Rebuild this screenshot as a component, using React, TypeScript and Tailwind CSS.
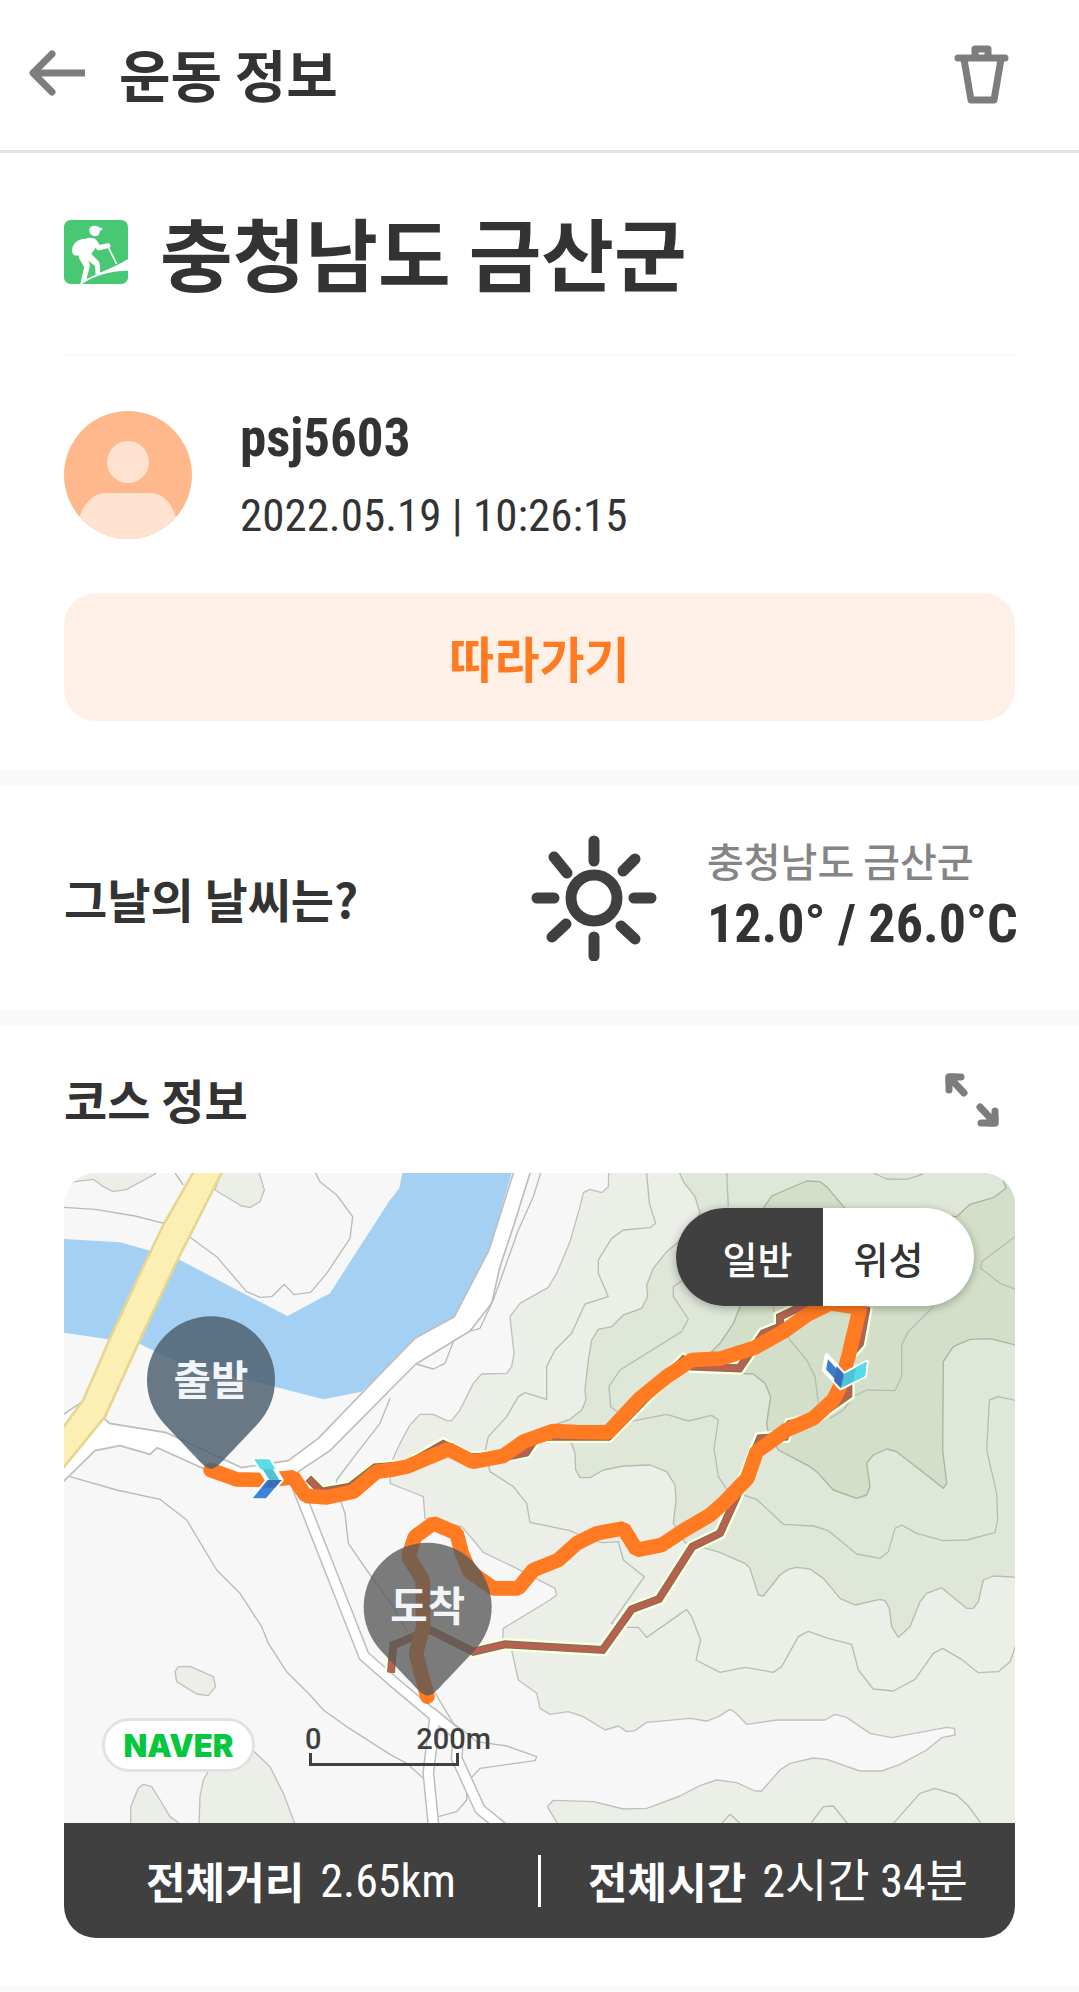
import type { ReactNode } from "react";

const ORANGE = "#ff7a20";

const water =
  "M12 207 180 217 270 242 360 270 560 375 682 438 810 370 880 260 990 90 1018 55 1027 9 1355 9 1285 250 1180 443 1065 505 990 582 905 665 790 688 645 650 350 575 235 520 145 508 12 488Z";

const lightWoods =
  "M1646 9 1645 50 1625 68 1590 58 1570 68 1560 110 1530 215 1490 310 1465 352 1380 400 1350 440 1362 550 1355 590 1340 610 1265 612 1240 640 1200 720 1175 752 1160 752 1120 733 1080 733 1050 765 1020 820 995 875 990 940 1040 960 1090 980 1095 1045 1205 1070 1240 1110 1270 1147 1370 1195 1485 1255 1490 1275 1470 1290 1330 1375 1328 1410 1355 1440 1375 1530 1430 1570 1440 1615 1470 1633 1525 1625 1570 1640 1635 1680 1675 1668 1700 1685 1725 1682 1760 1657 1890 1645 1940 1653 1975 1640 2010 1618 2025 1627 2060 1663 2150 1650 2295 1650 2325 1633 2360 1642 2430 1690 2495 1703 2660 1672 2683 1675 2686 1695 2645 1703 2600 1740 2520 1783 2465 1803 2400 1803 2300 1768 2260 1764 2190 1780 2160 1800 2105 1863 2085 1863 2030 1838 1970 1830 1920 1847 1860 1878 1760 1915 1690 1917 1600 1895 1480 1891 1462 1910 1495 1965 2875 1965 2875 0 1646 0Z";

const midWoods =
  "M1855 0 1870 35 1905 80 1920 130 1850 220 1820 245 1780 295 1760 345 1763 380 1745 415 1690 435 1655 470 1615 478 1595 510 1585 570 1575 660 1578 690 1565 720 1530 748 1490 762 1535 822 1545 850 1547 900 1560 923 1590 923 1630 900 1690 888 1770 885 1820 905 1845 945 1848 990 1840 1060 1875 1118 1980 1147 2020 1165 2055 1180 2070 1195 2095 1275 2110 1278 2160 1215 2185 1198 2210 1192 2250 1197 2290 1225 2340 1285 2385 1305 2460 1288 2475 1292 2488 1315 2495 1370 2515 1402 2550 1370 2580 1295 2600 1270 2645 1253 2720 1315 2740 1315 2755 1295 2770 1230 2800 1218 2875 1222 2875 0Z";

const darkWoods =
  "M2110 115 2135 78 2240 33 2280 35 2300 50 2355 115 2690 140 2730 103 2800 83 2838 55 2825 20 2875 0 2875 527 2790 506 2730 508 2680 530 2650 575 2648 840 2660 940 2650 955 2600 915 2510 845 2480 837 2440 855 2420 880 2430 950 2420 975 2390 985 2320 960 2270 905 2250 890 2155 840 2125 790 2120 760 2132 680 2115 640 2080 612 2030 610 1955 545 1980 520 2020 460 2040 410Z";

const groves = [
  "M20 45 45 35 100 28 130 50 160 65 200 58 280 15 300 0 12 0Z",
  "M485 0 465 60 545 108 570 112 600 95 613 60 595 0Z",
  "M345 1505 355 1490 390 1489 460 1520 467 1550 445 1577 410 1572 350 1535Z",
  "M212 1965 212 1910 235 1855 250 1843 275 1850 300 1890 330 1940 365 1965Z",
  "M417 1965 420 1880 430 1830 450 1795 530 1730 575 1738 630 1790 670 1870 706 1965Z",
];

const contours = [
  "M345 9 370 45",
  "M12 112 105 118 225 138 312 160",
  "M385 198 470 260 560 365 600 382 635 380 673 343 702 374 752 367 800 310 870 205 878 140 830 75 780 35 762 0",
  "M30 920 170 960 300 988 380 1050 470 1200 540 1270 605 1370 625 1420 680 1505 750 1575 790 1620 860 1670 990 1753 1040 1780 1090 1825",
  "M1442 9 1420 80 1375 180 1300 390 1260 475 1225 485",
  "M1068 582 1120 597 1155 580 1180 515",
  "M990 685 960 760 890 850 830 930 828 955 855 1030 865 1120 920 1200 1000 1310 1080 1450 1120 1560 1180 1660 1220 1690 1250 1715 1340 1728 1430 1760 1425 1772 1260 1795 1235 1822 1220 1840 1220 1890 1190 1925 1135 1940",
  "M1760 9 1768 100 1787 160 1770 173 1690 180 1655 205 1615 270 1615 310 1645 380 1575 402 1535 490 1485 540 1460 590 1460 688 1395 668 1375 680 1340 740 1285 800 1275 845 1290 905 1360 950 1400 1000 1410 1057 1530 1082 1560 1095 1625 1118 1675 1115 1690 1170 1753 1220 1655 1360 1700 1372 1735 1372 1760 1402 1880 1318 1895 1340 1922 1410 1908 1470 1980 1507 2055 1492 2140 1507 2165 1490 2215 1400 2245 1384 2305 1405 2375 1423 2395 1500 2440 1557 2500 1563 2565 1528 2620 1450 2648 1435 2700 1465 2755 1508 2815 1505 2850 1475 2868 1425",
  "M1870 330 1840 350 1840 380 1885 447 1865 485 1680 600 1647 650 1652 710 1710 755 1820 733 1885 753 1955 736 1975 750 1962 835 1975 920 2005 965 2050 975 2090 988 2170 1063 2260 1068 2305 1082 2390 1152 2460 1165 2485 1145 2505 1075 2525 1065 2570 1090 2650 1112 2720 1110 2805 1088 2813 1050 2810 970 2780 840 2788 690 2815 680 2868 692",
  "M2000 9 2005 110",
  "M2440 9 2480 27 2540 28 2590 12",
  "M2868 198 2765 275 2762 295 2820 340 2868 358",
  "M2620 410 2545 485 2525 525 2525 620 2505 662 2420 660 2380 680 2350 720 2310 745",
  "M2140 410 2145 440 2190 510 2240 570 2265 620 2275 700",
  "M1985 1960 2010 1933 2040 1960",
  "M2253 1960 2290 1910 2320 1908 2362 1960",
  "M2500 1960 2580 1870 2625 1855 2690 1875 2725 1908 2763 1960",
];

const riverRoad =
  "M0 945 12 933 105 842 180 827 270 853 292 833 440 900 530 945 700 940 715 905 810 842 990 660 1068 582 1230 483 1295 400 1320 290 1360 170 1413 0 1363 0 1287 240 1183 440 1065 505 990 582 775 805 685 872 545 893 320 788 148 760 130 742 60 700 0 740Z";

const southRoads = "M712 950 912 1458 1000 1535 1125 1640 1105 1810 1121 1970M1110 1625 1195 1695 1190 1765 1260 1918 1330 1975";

const trail =
  "M745 925 785 965 870 950 945 892 1040 885 1150 822 1230 862 1350 858 1398 848 1430 800 1645 800 1870 570 1895 590 2038 595 2110 490 2160 470 2160 440 2240 402M2420 410 2400 520 2365 560 2365 675 2265 745 2190 762 2175 800 2100 805 2030 980 1980 1090 1897 1130 1797 1287 1715 1318 1628 1440 1335 1423 1240 1445 1110 1380 1000 1425 993 1508";

const route =
  "M452 900 530 928 620 930 700 922 738 978 800 982 880 965 950 905 990 900 1040 890 1165 838 1238 875 1330 858 1390 815 1480 783 1550 786 1645 787 1740 685 1820 620 1895 570 1980 566 2080 535 2170 485 2240 435 2310 400 2400 413 2365 560 2340 650 2320 690 2260 745 2180 780 2090 845 2062 925 1990 1000 1950 1035 1870 1082 1805 1125 1730 1140 1690 1075 1610 1090 1550 1120 1495 1170 1420 1200 1375 1255 1300 1255 1230 1205 1205 1150 1190 1090 1120 1060 1065 1100 1045 1160 1088 1230 1090 1370 1068 1450 1102 1580";

function Pin({ x, y, color, opacity, label }: { x: number; y: number; color: string; opacity: number; label: string }) {
  return (
    <g transform={`translate(${x} ${y})`}>
      <path
        d="M0 265C-20 262-35 240-60 215L-140 130A192 192 0 1 1 140 130L60 215C35 240 20 262 0 265Z"
        fill={color}
        fillOpacity={opacity}
      />
      <text y="42" textAnchor="middle" fontSize="122" fontWeight="700" fill="#f1f5f9">
        {label}
      </text>
    </g>
  );
}

function CourseMap() {
  return (
    <svg viewBox="12 9 2853 1950" className="block h-auto w-full bg-[#f7f7f7]" role="img" aria-label="코스 지도">
      <g stroke="#bfc1bd" strokeWidth="4" strokeLinejoin="round" fill="none">
        <path d={water} fill="#a4d1f3" stroke="none" />
        <path d={lightWoods} fill="#ecefe8" />
        <path d={midWoods} fill="#dfe7d9" stroke="#b5bdaf" />
        <path d={darkWoods} fill="#d3dfc8" stroke="#a9b5a0" />
        {groves.map((d) => (
          <path key={d} d={d} fill="#ecefe8" />
        ))}
        {contours.map((d) => (
          <path key={d} d={d} stroke="#b8bcb4" />
        ))}
        <path d={southRoads} stroke="#bdbdbd" strokeWidth="36" />
        <path d={riverRoad} fill="#ffffff" stroke="#bdbdbd" strokeWidth="5" />
        <path d={southRoads} stroke="#ffffff" strokeWidth="27" />
        <path d="M404 0 310 165 245 300 150 505 70 690 0 785V905L135 740 235 520 355 265 489 0Z" fill="#fbefb3" stroke="#e6d691" strokeWidth="8" />
      </g>
      <g fill="none">
        <path d={trail} stroke="#fdffe6" strokeWidth="38" />
        <path d={trail} stroke="#827443" strokeWidth="24" />
        <path d={trail} stroke="#b96053" strokeWidth="17" />
        <path d={route} stroke={ORANGE} strokeWidth="44" strokeLinecap="round" strokeLinejoin="bevel" />
      </g>
      <g strokeLinejoin="round">
        <path d="M582 868H628L665 930 618 985H578L622 932Z" fill="#4fc3d4" stroke="#fff" strokeWidth="12" />
        <path d="M582 868H628L646 898H602Z" fill="#5cdbe9" />
        <path d="M622 930H665L618 985H578Z" fill="#3d86d6" />
        <path d="M628 930H665L645 953H610Z" fill="#3a6fb8" />
        <path d="M2300 555 2352 612 2420 575 2415 618 2342 655 2292 600Z" fill="#3b7fcb" stroke="#fff" strokeWidth="12" />
        <path d="M2352 612 2420 575 2415 618 2342 655Z" fill="#4fc3d4" />
        <path d="M2388 592 2420 575 2415 618 2380 636Z" fill="#55dbe9" />
        <path d="M2330 588 2352 612 2342 655 2322 633Z" fill="#3a6fb8" />
      </g>
      <Pin x={453} y={632} color="#4d5f6f" opacity={0.84} label="출발" />
      <Pin x={1103} y={1312} color="#585858" opacity={0.78} label="도착" />
    </svg>
  );
}

function SunIcon() {
  return (
    <svg viewBox="0 0 126 126" className="size-[126px] shrink-0" fill="none" stroke="#404040" strokeLinecap="round" aria-hidden="true">
      <circle cx="63" cy="63" r="23" strokeWidth="11" />
      <path
        strokeWidth="11"
        d="M63 6v20M63 102v19M6 63h17M103 63h17M23 22l13 16M104 24 92 36M21 102l14-13M90 91l14 13"
      />
    </svg>
  );
}

function HikerIcon() {
  return (
    <svg viewBox="24 26 192 192" className="size-16 shrink-0" fill="#fff" aria-hidden="true">
      <rect x="24" y="26" width="192" height="192" rx="20" fill="#48c774" />
      <path d="M70 218C110 188 165 175 216 143V178C160 178 110 195 78 218Z" />
      <path d="M100 60C98 49 106 43 116 43 124 43 128 46 131 49L139 50 138 56 132 58 129 68C125 78 104 78 100 60Z" />
      <path d="M88 82C65 82 48 98 48 118 48 132 60 136 72 130L84 108Z" />
      <path d="M86 84C96 76 118 78 123 88L131 101 154 96C164 94 167 107 158 110L131 117C125 118 122 114 119 109L106 128 127 149C133 156 132 165 133 190L119 194 117 164 96 148 101 159C103 168 94 186 92 208L74 216C77 196 84 174 84 166L70 142C65 132 70 116 78 102Z" />
      <path d="M156 106 182 158" stroke="#fff" strokeWidth="5" />
    </svg>
  );
}

function Stat({ label, children }: { label: string; children: ReactNode }) {
  return (
    <div className="flex items-center gap-4">
      <dt className="text-[43px] font-bold">{label}</dt>
      <dd className="font-['Roboto_Condensed','Noto_Sans_CJK_KR',sans-serif] text-[46px]">{children}</dd>
    </div>
  );
}

export default function App() {
  return (
    <div className="min-h-screen bg-white font-['Noto_Sans_CJK_KR',sans-serif] text-[#333]">
      <header className="flex h-[153px] items-center border-b-[3px] border-[#e2e2e2] pr-[69px] pb-1 pl-7">
        <button type="button" aria-label="뒤로" className="mr-[34px] shrink-0">
          <svg viewBox="0 0 57 46" className="h-[46px] w-[57px]" fill="none" stroke="#7d7d7d" strokeWidth="7">
            <path d="M4 23H57" />
            <path d="M24 4 5 23 24 42" strokeLinecap="round" strokeLinejoin="round" />
          </svg>
        </button>
        <h1 className="grow text-[56px] leading-none font-bold">운동 정보</h1>
        <button type="button" aria-label="삭제" className="shrink-0">
          <svg viewBox="0 0 64 64" className="size-16" fill="none" stroke="#7d7d7d" strokeLinecap="round" strokeLinejoin="round" strokeWidth="7">
            <path d="M12 17H59M29 15V8H42V15M18 18 25 59H48L55 18" />
          </svg>
        </button>
      </header>

      <main>
        <section className="px-16 pb-[49px]">
          <div className="flex h-[204px] items-center gap-8 border-b-[3px] border-[#fafafa] pb-1">
            <HikerIcon />
            <h2 className="text-[79px] leading-none font-bold">충청남도 금산군</h2>
          </div>
          <div className="flex items-center gap-12 py-[47px]">
            <svg viewBox="0 0 128 128" className="size-32 shrink-0 rounded-full bg-[#ffb88c]" role="img" aria-label="프로필">
              <circle cx="64" cy="51" r="21" fill="#ffe2d0" />
              <path d="M14 128V112C18 94 28 82 42 82H86C100 82 110 94 113 112V128Z" fill="#ffe2d0" />
            </svg>
            <div className="flex flex-col gap-[18px] pt-1 font-['Roboto_Condensed','Liberation_Sans',sans-serif] leading-[60px]">
              <p className="text-[53px] font-bold">psj5603</p>
              <p className="text-[45px]">2022.05.19 | 10:26:15</p>
            </div>
          </div>
          <button type="button" className="h-32 w-full rounded-[32px] bg-[#fff0e7] text-[49px] font-bold text-[#ff7a20]">
            따라가기
          </button>
        </section>

        <section className="flex items-center border-y-[16px] border-[#f9f9f9] px-16 py-12">
          <h3 className="grow text-[47px] font-bold">그날의 날씨는?</h3>
          <SunIcon />
          <div className="ml-[50px] w-[308px] shrink-0">
            <p className="text-[40px] leading-[52px] font-medium whitespace-nowrap text-[#858585]">충청남도 금산군</p>
            <p className="font-['Roboto_Condensed','Liberation_Sans',sans-serif] text-[54px] leading-[76px] font-bold whitespace-nowrap">
              12.0° / 26.0°C
            </p>
          </div>
        </section>

        <section className="px-16 pb-12">
          <div className="flex h-[147px] items-center justify-between pr-4">
            <h3 className="text-[47px] font-bold">코스 정보</h3>
            <button type="button" aria-label="지도 확대">
              <svg viewBox="0 0 54 54" className="size-[54px]" fill="none" stroke="#7d7d7d" strokeLinecap="round" strokeLinejoin="round" strokeWidth="7">
                <path d="M4 17V4H16M5 5 19 20M50 38V50H36M49 49 35 34" />
                <path d="M4 4H10L4 10ZM50 50H44L50 44Z" fill="#7d7d7d" />
              </svg>
            </button>
          </div>
          <div className="overflow-hidden rounded-[32px]">
            <div className="relative">
              <CourseMap />
              <div className="absolute top-[35px] right-[41px] flex h-[98px] w-[298px] overflow-hidden rounded-full bg-white text-[38px] font-medium shadow-[0_2px_10px_rgba(0,0,0,0.3)]">
                <button type="button" aria-pressed="true" className="flex-1 bg-[#404040] pl-4 text-white">일반</button>
                <button type="button" aria-pressed="false" className="flex-1 pr-5">위성</button>
              </div>
              <div className="absolute bottom-[51px] left-[38px] flex h-[54px] w-[153px] items-center justify-center rounded-full border-[3px] border-[#e2e2e2] bg-white font-['Inter'] text-[31px] leading-none font-black text-[#03c73c]">
                NAVER
              </div>
              <div className="absolute bottom-[57px] left-[241px] w-[186px] font-['Roboto'] text-[29px] leading-[28px] font-medium text-[#404040]">
                <div className="flex justify-between">
                  <span>0</span>
                  <span>200m</span>
                </div>
                <div className="ml-1 h-[13px] w-[150px] border-x-[3px] border-b-[3px] border-[#404040]" />
              </div>
            </div>
            <dl className="grid h-[115px] grid-cols-[1fr_3px_1fr] items-center bg-[#404040] leading-none whitespace-nowrap text-white">
              <div className="flex justify-center">
                <Stat label="전체거리">2.65km</Stat>
              </div>
              <div className="h-[52px] bg-white" />
              <div className="flex justify-center">
                <Stat label="전체시간">2시간 34분</Stat>
              </div>
            </dl>
          </div>
        </section>
        <div className="h-4 bg-[#f9f9f9]" />
      </main>
    </div>
  );
}
